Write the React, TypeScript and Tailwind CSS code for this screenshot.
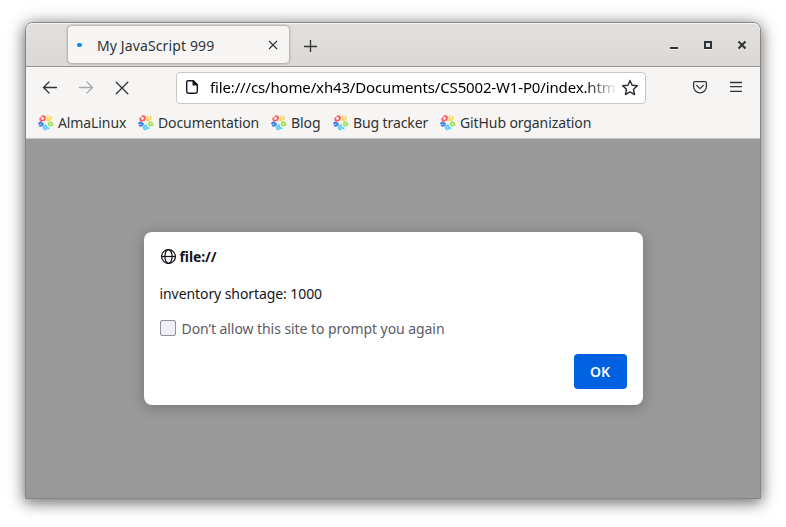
import React from "react";

function AlmaIcon() {
  return (
    <svg width="16" height="16" viewBox="0 0 16 16" fill="none" strokeLinecap="round" className="mt-px shrink-0">
      <g stroke="#ff5a5c" strokeWidth="1.9">
        <path d="M4.4 1.4C6.4.8 7.2 2 6.9 3.4c-.1.8-.5 1.4-1 1.8" />
        <path d="M2.4 3.2c-.5 1.7.5 2.7 1.8 2.5" />
      </g>
      <g stroke="#ffd65a" strokeWidth="1.9">
        <path d="M9.8 1.3c-.9 1-.6 2 .3 2.5" />
        <path d="M12.6 1.8c.6 1.5 0 2.8-1.6 3.4-.8.3-1.4.2-2 0" />
      </g>
      <g stroke="#9be35c" strokeWidth="1.9">
        <path d="M11.4 7.4c1.6-.6 2.9.4 3.2 2.6" />
        <path d="M10.6 8.6c.1 1.4 1.1 2.3 2.4 1.9" />
      </g>
      <g stroke="#5cccff" strokeWidth="1.9">
        <path d="M5.6 12.4c.3 1.6 1.2 2.2 2.3 1.9M10.6 13.2c-1.8.1-2.8-1.2-2.7-2.9" />
        <path d="M6 11.8l1.3-1.2" />
      </g>
      <g stroke="#3b80e4" strokeWidth="2.1">
        <path d="M1.2 8.4c.7-.8 1.6-.9 2.2-.4" />
        <path d="M1.9 10.6c1.4.4 2.7-.3 2.9-1.8" />
      </g>
    </svg>
  );
}

function Bookmark({ label, box }: { label: string; box: string }) {
  return (
    <div className={`flex shrink-0 items-center gap-1 ${box}`}>
      <AlmaIcon />
      <span className="tracking-[-0.1px] whitespace-nowrap">{label}</span>
    </div>
  );
}

function TitleBar() {
  return (
    <div className="flex h-[44px] shrink-0 items-start rounded-t-[7px] border-b border-[#979492] bg-linear-to-b from-[#e2dfdc] to-[#dcd8d5] pt-[3px] shadow-[inset_0_1px_0_#f7f6f5]">
      <div className="ml-[42px] flex h-[37px] w-[221px] items-center rounded bg-[#f6f5f4] shadow-[0_0_3px_rgba(0,0,0,0.45)]">
        <div className="ml-[9px] h-1 w-[5px] rounded-full bg-[#0a84ff]" />
        <span className="mt-px ml-[15px] w-[160px] text-[14px] tracking-[0.12px] whitespace-nowrap">My JavaScript 999</span>
        <svg width="10" height="10" viewBox="0 0 10 10" className="ml-[11px]" stroke="#2e3436" strokeWidth="1.1">
          <path d="M1 1l8 8M9 1L1 9" />
        </svg>
      </div>
      <svg width="14" height="14" viewBox="0 0 14 14" className="mt-[13px] ml-[14px]" stroke="#2e3436" strokeWidth="1.3">
        <path d="M7.5 1v12M1 7.5h13" />
      </svg>
      <div className="mt-[14px] mr-[13px] ml-auto flex gap-[24px]">
        <svg width="10" height="10" viewBox="0 0 10 10"><path d="M1 7h8v2H1z" fill="#2e3436" /><path d="M1 9h8v1H1z" fill="#fff" opacity=".7" /></svg>
        <svg width="10" height="10" viewBox="0 0 10 10" fill="none"><path d="M1 9.5h8" stroke="#fff" opacity=".7" /><path d="M2 2h6v6H2z" stroke="#2e3436" strokeWidth="2" /></svg>
        <svg width="10" height="10" viewBox="0 0 10 10" stroke="#2e3436" strokeWidth="2"><path d="M1.5 1.5l7 7M8.5 1.5l-7 7" /></svg>
      </div>
    </div>
  );
}

function Toolbar() {
  return (
    <div className="flex h-[41px] shrink-0 items-center pl-4">
      <div className="flex gap-5">
        <svg width="16" height="16" viewBox="0 0 16 16" fill="none" stroke="#2e3436" strokeWidth="1.3" strokeLinecap="round" strokeLinejoin="round">
          <path d="M14.5 7.5H1.5M7 2L1.5 7.5 7 13" />
        </svg>
        <svg width="16" height="16" viewBox="0 0 16 16" fill="none" stroke="#a9aaaa" strokeWidth="1.3" strokeLinecap="round" strokeLinejoin="round">
          <path d="M1.5 7.5h13M9 2L14.5 7.5 9 13" />
        </svg>
        <svg width="16" height="16" viewBox="0 0 16 16" fill="none" stroke="#2e3436" strokeWidth="1.3" strokeLinecap="round">
          <path d="M2.2 2.2l11.6 11.6M13.8 2.2L2.2 13.8" />
        </svg>
      </div>
      <div className="ml-[46px] flex h-8 w-[470px] items-center rounded-[4px] border border-[#cdc7c2] bg-white pl-[7px]">
        <svg width="16" height="16" viewBox="0 0 16 16" fill="none" stroke="#15141a" strokeWidth="1.4" strokeLinejoin="round" className="-mt-px">
          <path d="M9.2 1.7H4.4a1.7 1.7 0 0 0-1.7 1.7v9.2a1.7 1.7 0 0 0 1.7 1.7h7.2a1.7 1.7 0 0 0 1.7-1.7V5.8z" />
          <path d="M9.2 1.7v4.1h4.1z" fill="#15141a" />
        </svg>
        <div className="ml-[10px] w-[406px] mask-r-from-[375px] mask-r-to-[408px] text-[15px] tracking-[-0.15px] whitespace-nowrap text-black">
          file:///cs/home/xh43/Documents/CS5002-W1-P0/index.htm
        </div>
        <svg width="18" height="18" viewBox="0 0 16 16" className="ml-[5px] shrink-0" fill="none" stroke="#2b2a33" strokeWidth="1.25" strokeLinejoin="round">
          <path d="M8 1.3l1.9 4.2 4.7.5-3.5 3.1 1 4.7L8 11.5l-4.1 2.3 1-4.7L1.4 6l4.7-.5z" />
        </svg>
      </div>
      <svg width="16" height="16" viewBox="0 0 16 16" className="ml-[46px]" fill="none" stroke="#2e3436" strokeWidth="1.25" strokeLinecap="round" strokeLinejoin="round">
        <path d="M3 1.6h10a1.4 1.4 0 0 1 1.4 1.4v3.5a6.4 6.4 0 0 1-12.8 0V3A1.4 1.4 0 0 1 3 1.6z" />
        <path d="M4.6 5.4l3.4 3.2 3.4-3.2" />
      </svg>
      <svg width="16" height="16" viewBox="0 0 16 16" className="-mt-px ml-5" stroke="#2e3436" strokeWidth="1.3">
        <path d="M2 3.5h12M2 7.7h12M2 12.3h12" />
      </svg>
    </div>
  );
}

function AlertDialog() {
  return (
    <div className="flex h-[173px] w-[499px] flex-col rounded-lg bg-white px-4 text-[14px] text-[#15141a] shadow-[0_2px_14px_rgba(0,0,0,0.25)]">
      <div className="mt-[14px] flex h-5 items-center gap-1 font-bold">
        <svg width="16" height="16" viewBox="0 0 16 16" fill="none" stroke="#15141a" strokeWidth="1.25">
          <circle cx="8.5" cy="8.5" r="6.9" />
          <ellipse cx="8.5" cy="8.5" rx="3.6" ry="6.9" />
          <path d="M1.6 8.5h13.8" />
        </svg>
        <span className="tracking-[-0.1px]">file://</span>
      </div>
      <div className="mt-[18px] h-5 leading-5 tracking-[-0.08px]">inventory shortage: 1000</div>
      <div className="mt-[14px] flex h-5 items-center gap-[6px] text-[#5b5b66]">
        <div className="h-4 w-4 rounded-[2px] border border-[#8f8f9d] bg-[#f0f0f4]" />
        <span className="tracking-[-0.06px]">Don’t allow this site to prompt you again</span>
      </div>
      <button className="mt-4 h-[35px] w-[53px] self-end rounded-[4px] bg-[#0061e0] font-semibold text-[#fbfbfe]">OK</button>
    </div>
  );
}

export default function App() {
  return (
    <div className="h-[527px] w-[786px] overflow-hidden bg-white pt-[22px] pl-[25px] font-['Noto_Sans',sans-serif] text-[#2e3436]">
      <div className="flex h-[477px] w-[736px] flex-col rounded-t-lg border border-[#878787] bg-[#f6f5f4] shadow-[0_3px_14px_1px_rgba(0,0,0,0.5),0_1px_24px_rgba(0,0,0,0.12)]">
        <TitleBar />
        <Toolbar />
        <div className="flex h-[31px] shrink-0 items-center border-b border-[#c9c3bf] pb-[2px] pl-3 text-[14px]">
          <Bookmark label="AlmaLinux" box="w-[100px]" />
          <Bookmark label="Documentation" box="w-[133px]" />
          <Bookmark label="Blog" box="w-[62px]" />
          <Bookmark label="Bug tracker" box="w-[107px]" />
          <Bookmark label="GitHub organization" box="w-[152px]" />
        </div>
        <div className="flex grow justify-center bg-[#99999a] pt-[93px]">
          <AlertDialog />
        </div>
      </div>
    </div>
  );
}
